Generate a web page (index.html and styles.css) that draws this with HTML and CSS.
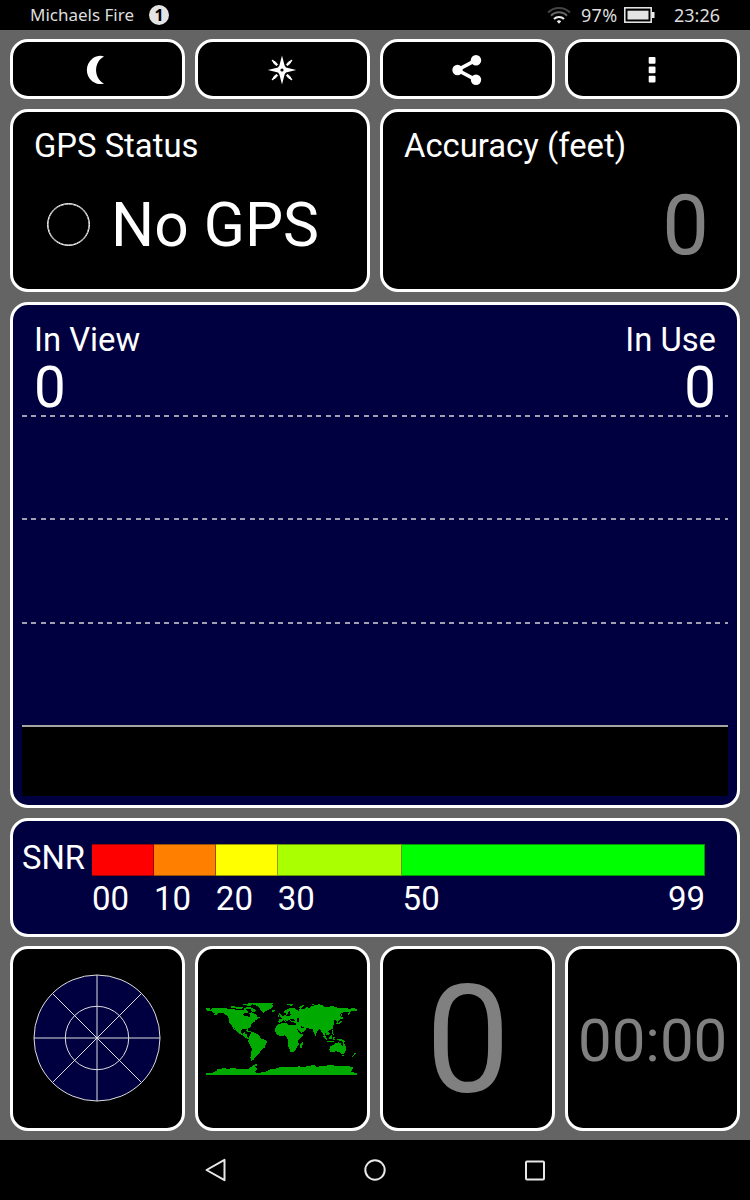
FILE: index.html
```html
<!DOCTYPE html>
<html lang="en">
<head>
  <meta charset="UTF-8">
  <title>GPS Status</title>
  <meta name="viewport" content="width=device-width, initial-scale=1.0">
  <link rel="stylesheet" href="styles.css">
</head>
<body>
<div class="screen">
  <header class="status-bar">
    <span class="device">Michaels Fire</span>
    <span class="badge">1</span>
    <svg class="wifi" width="24" height="18" viewBox="0 0 24 18" fill="none" stroke-width="2">
      <path d="M1 6.5A15.5 15.5 0 0 1 23 6.5" stroke="#444"/>
      <path d="M4 9.8A11 11 0 0 1 20 9.8" stroke="#666"/>
      <path d="M7 13A7 7 0 0 1 17 13" stroke="#eee"/>
      <path d="M9.8 15.3Q12 13.3 14.2 15.3L12 17.8Z" fill="#eee"/>
    </svg>
    <span class="percent">97%</span>
    <svg class="battery" width="31" height="16" viewBox="0 0 31 16">
      <rect x="0.8" y="0.8" width="26.4" height="14.4" fill="none" stroke="#eee" stroke-width="1.5"/>
      <rect x="3.5" y="3.7" width="21" height="8.8" fill="#e4e4e4"/>
      <rect x="28" y="5" width="2.5" height="6" fill="#eee"/>
    </svg>
    <span class="clock">23:26</span>
  </header>

  <main class="app">
    <nav class="row toolbar">
      <button class="panel">
        <svg width="30" height="30" viewBox="0 0 30 30"><path d="M22 1.400C18.500.3 14 .8 10.500 3.500C3 9.500 3 20.500 10.500 26.500C14 29 18.500 29.700 22 28.500C11.500 23 11.500 7 22 1.400Z" fill="#fff"/></svg>
      </button>
      <button class="panel">
        <svg width="30" height="30" viewBox="0 0 30 30" fill="#fff">
          <path d="M15 .5L17.600 10.500L19 12.400L29.200 15L19 17.400L17.600 19.500L15 29.500L12.400 19.500L11 17.400L.8 15L11 12.400L12.400 10.500Z"/>
          <path d="M5 5L8.700 7.200L10.600 9.600L9.600 10.600L7.200 8.700ZM25 5L22.800 8.700L20.400 10.600L19.400 9.600L21.300 7.200ZM5 25L7.200 21.300L9.600 19.400L10.600 20.400L8.700 22.800ZM25 25L21.300 22.800L19.400 20.400L20.400 19.400L22.800 21.300Z" stroke="#fff" stroke-width="1"/>
          <circle cx="15" cy="15" r="1.600" fill="#000"/>
        </svg>
      </button>
      <button class="panel">
        <svg width="30" height="32" viewBox="0 0 30 32" fill="#fff">
          <path d="M24 6.200L5.500 16L24 25.800" fill="none" stroke="#fff" stroke-width="3.600"/>
          <circle cx="24" cy="6.200" r="5.200"/><circle cx="5.500" cy="16" r="5.200"/><circle cx="24" cy="25.800" r="5.200"/>
        </svg>
      </button>
      <button class="panel">
        <svg width="8" height="28" viewBox="0 0 8 28" fill="#fff">
          <rect x=".7" y="1" width="6.800" height="6.800" rx="1"/><rect x=".7" y="10.400" width="6.800" height="6.800" rx="1"/><rect x=".7" y="19.800" width="6.800" height="6.800" rx="1"/>
        </svg>
      </button>
    </nav>

    <section class="row summary">
      <div class="panel">
        <h2>GPS Status</h2>
        <div class="gps-state">
          <span class="led"></span>
          <span>No GPS</span>
        </div>
      </div>
      <div class="panel">
        <h2>Accuracy (feet)</h2>
        <p class="accuracy">0</p>
      </div>
    </section>

    <section class="panel chart">
      <div class="chart-head">
        <div><h2>In View</h2><p class="count">0</p></div>
        <div class="in-use"><h2>In Use</h2><p class="count">0</p></div>
      </div>
      <div class="band"></div>
      <div class="band"></div>
      <div class="band"></div>
      <div class="axis"></div>
    </section>

    <section class="panel snr">
      <h2>SNR</h2>
      <div class="scale">
        <div class="step red"><i></i>00</div>
        <div class="step orange"><i></i>10</div>
        <div class="step yellow"><i></i>20</div>
        <div class="step lime"><i></i>30</div>
        <div class="step green"><i></i><span>50</span><span>99</span></div>
      </div>
    </section>

    <section class="row tiles">
      <div class="panel">
        <svg class="radar" width="130" height="130" viewBox="0 0 130 130" fill="none" stroke="#ddd" stroke-width="1">
          <circle cx="65" cy="65" r="63" fill="#000040"/>
          <circle cx="65" cy="65" r="31.700"/>
          <path d="M65 2V128M2 65H128M20.450 20.450L109.550 109.550M109.550 20.450L20.450 109.550"/>
        </svg>
      </div>
      <div class="panel">
        <!-- world map -->
        <svg class="map" width="172" height="100" viewBox="0 0 516 300" fill="#00aa00" shape-rendering="crispEdges">
          <!-- north america -->
          <path d="M30 54L42 55L44 60L50 55L57 53L72 55L84 54L100 57L112 56L122 60L136 61L144 58L146 53L151 54L150 61L158 63L155 69L146 68L140 73L146 79L156 79L160 85L162 76L160 70L166 66L174 71L178 70L183 79L190 84L182 87L187 91L177 91L179 94L172 97L166 103L164 110L156 116L158 125L154 125L151 117L140 117L134 121L135 129L141 132L145 125L149 125L147 132L153 134L153 141L157 145L162 146L158 148L149 144L144 138L137 135L128 131L121 123L115 114L116 121L112 115L107 106L100 98L99 88L96 81L89 74L81 69L68 68L61 74L53 75L57 71L51 69L49 63L43 64L30 61Z"/>
          <path d="M103 50L116 48L121 54L108 54ZM120 51L132 50L143 53L136 57L122 57ZM138 44L152 41L168 39L184 38L178 42L167 43L165 49L152 49L154 45ZM148 51L163 51L172 56L180 61L177 67L168 65L164 58L150 56ZM187 82L193 82L191 86ZM150 121L160 122L166 126L158 125ZM167 126L173 127L171 130L166 129Z"/>
          <!-- greenland, iceland -->
          <path d="M170 43L188 39L210 38L234 39L229 43L232 48L228 54L221 58L211 62L204 69L198 66L192 58L190 51L180 47ZM227 62L235 60L238 63L230 67Z"/>
          <!-- south america -->
          <path d="M161 132L168 128L180 130L190 137L195 145L206 149L214 154L209 162L206 173L198 178L193 185L187 192L183 196L178 200L174 208L172 211L166 212L163 204L166 190L167 174L160 162L156 154L160 145Z"/>
          <!-- africa -->
          <path d="M248 103L259 99L270 99L275 104L287 105L298 106L303 115L308 126L313 132L323 131L317 141L307 151L308 163L303 170L300 179L291 186L283 186L280 176L276 166L277 153L272 143L266 136L251 139L240 131L236 120L239 112ZM315 162L320 156L320 164L316 174L311 173L311 166Z"/>
          <!-- europe and asia -->
          <path d="M247 96L248 88L259 88L259 84L254 81L263 77L270 73L268 69L263 69L263 64L273 58L283 54L295 55L301 61L311 58L323 58L330 52L341 53L344 49L353 47L368 43L379 45L386 50L395 50L412 49L427 54L446 54L461 56L472 54L483 57L483 63L470 63L464 65L461 73L455 77L455 69L464 64L447 67L437 68L430 76L436 80L435 87L428 92L425 99L422 98L424 92L415 91L411 97L417 98L412 106L412 114L404 119L397 124L395 124L401 131L396 137L391 134L389 128L386 128L387 135L392 145L387 143L382 133L377 126L374 119L370 117L364 124L358 134L354 129L350 118L342 116L332 113L329 121L319 127L308 130L300 116L297 107L300 102L289 103L283 97L280 100L275 93L268 91L270 96L266 95L262 90L257 96L250 99Z"/>
          <path d="M253 80L251 75L247 72L252 69L257 76L259 81ZM245 76L249 76L249 80L245 79ZM271 43L283 42L292 44L287 47L274 46ZM309 54L316 47L325 45L317 52L313 57ZM340 44L354 43L352 47ZM435 90L439 95L433 101L421 102L418 100L430 97ZM434 81L442 83L437 89ZM436 70L440 78L437 82ZM357 132L361 134L359 138Z"/>
          <g fill="#000"><path d="M273 88L280 91L287 97L293 97L302 100L294 102L287 101L279 98ZM282 89L291 86L298 92L287 94ZM303 86L309 84L308 97L303 94ZM302 113L314 128L309 131ZM314 107L325 114L317 116ZM272 74L280 64L283 66L280 72L287 73L279 78L269 80ZM307 57L314 60L307 62Z"/></g>
          <!-- indonesia, australia, new zealand -->
          <path d="M380 135L389 142L395 150L390 150L384 143ZM398 142L407 134L410 138L406 147L398 148ZM411 142L418 141L414 145L417 151L411 149ZM408 121L412 121L411 128L415 135L411 136L407 129ZM392 152L407 153L418 155L414 157L394 155ZM423 146L433 146L444 151L451 157L442 156L436 153L430 153L424 149ZM402 169L410 166L418 159L424 161L426 157L435 159L435 165L440 167L442 156L446 163L450 172L449 183L444 191L436 192L429 185L419 184L402 187L400 178ZM438 195L444 195L441 199ZM472 188L481 189L478 194L470 201L468 199L475 194Z"/>
          <!-- antarctica -->
          <path d="M30 255V249L49 249L61 243L65 237L82 235L100 236L113 234L128 237L142 236L158 236L166 230L181 222L183 226L176 231L184 235L181 241L174 246L183 249L207 246L220 239L240 236L250 232L267 230L292 232L308 229L327 231L338 227L355 226L361 232L378 227L410 226L427 229L442 227L465 230L472 232L468 240L466 246L483 249V255Z"/>
        </svg>
      </div>
      <div class="panel fix">0</div>
      <div class="panel timer">00:00</div>
    </section>
  </main>

  <footer class="nav-bar">
    <svg width="24" height="26" viewBox="0 0 24 26"><path d="M3.500 13L21.500 2.800V23.200Z" fill="none" stroke="#e8e8e8" stroke-width="2" stroke-linejoin="round"/></svg>
    <svg width="24" height="24" viewBox="0 0 24 24"><circle cx="12" cy="12" r="9.700" fill="none" stroke="#e8e8e8" stroke-width="2"/></svg>
    <svg width="24" height="24" viewBox="0 0 24 24"><rect x="3" y="3.500" width="18" height="18" rx="1" fill="none" stroke="#e8e8e8" stroke-width="2"/></svg>
  </footer>
</div>
</body>
</html>
```

FILE: styles.css
```css
* { box-sizing: border-box; }
body { margin: 0; background: #000; color: #fff; font-family: Roboto, sans-serif; }
h2, p { margin: 0; font-weight: 400; }
h2 { font-size: 32.8px; line-height: 40px; }
svg { display: block; flex: none; }

.screen { width: 750px; height: 1200px; display: flex; flex-direction: column; overflow: hidden; }

.status-bar { height: 30px; display: flex; align-items: center; padding: 0 30px; color: #ddd; font: 17px/30px "Noto Sans", sans-serif; }
.device { width: 104px; white-space: nowrap; }
.badge { width: 20px; height: 20px; margin-left: 15px; border-radius: 50%; background: #e4e4e4; color: #000; font-size: 16px; font-weight: 700; line-height: 20px; text-align: center; }
.wifi { margin-left: auto; }
.percent { width: 37px; margin-left: 10px; padding-bottom: 1px; font-size: 18px; letter-spacing: 0.3px; }
.battery { margin-left: 6px; }
.clock { width: 46px; margin-left: 19px; padding-bottom: 1px; font-size: 18px; }

.app { flex: 1; display: flex; flex-direction: column; gap: 10px; padding: 9px 10px; background: #646464; }
.row { display: flex; gap: 10px; }
.panel { flex: 1; min-width: 0; padding: 0; background: #000; border: 3px solid #fff; border-radius: 18px; color: #fff; }

.toolbar { height: 60px; }
.toolbar .panel { display: flex; align-items: center; justify-content: center; padding: 1px 1px 0 0; }

.summary { height: 183px; }
.summary .panel { padding: 14px 21px 0; }
.gps-state { display: flex; align-items: center; margin: 24px 0 0 13px; font-size: 60.5px; line-height: 72px; }
.led { width: 43px; height: 43px; margin: -3px 21px 0 0; border: 1px solid #fff; border-radius: 50%; box-shadow: inset 0 0 0 0.5px #fff; }
.accuracy { margin: 12px 7px 0 0; color: #808080; font-size: 83px; line-height: 96px; text-align: right; }

.chart { flex: 0 0 506px; padding: 0 9px 9px; background: #000040; display: flex; flex-direction: column; }
.chart-head { height: 110px; display: flex; justify-content: space-between; padding: 15px 12px 0; }
.in-use { text-align: right; }
.count { font-size: 56.5px; line-height: 60px; margin-top: -2px; }
.band { flex: 1; background: repeating-linear-gradient(90deg, #a0a0b0 0 4.7px, transparent 4.7px 9.5px) top / 100% 2px no-repeat; }
.axis { height: 71px; background: #000; border-top: 2px solid #a4a4a0; }

.snr { flex: 0 0 119px; padding: 0 32px 0 9px; background: #000040; display: flex; }
.snr h2 { width: 70px; padding-top: 17px; }
.scale { flex: 1; display: flex; padding-top: 23px; font-size: 33px; line-height: 40px; }
.step { flex: 10 1 0; min-width: 0; text-indent: 2px; }
.step i { display: block; height: 32px; margin-bottom: 3px; border: solid rgba(0, 0, 0, 0.4); border-width: 1px 1px 1px 0; }
.red i { background: #f00; }
.orange i { background: #ff8000; }
.yellow i { background: #ff0; }
.lime { flex-grow: 20; }
.lime i { background: #af0; }
.green { flex-grow: 49; display: flex; flex-wrap: wrap; justify-content: space-between; align-content: flex-start; text-indent: 1px; }
.green i { width: 100%; background: #0f0; }

.tiles { height: 185px; margin-top: -1px; }
.tiles .panel { display: flex; align-items: center; justify-content: center; overflow: hidden; }
.tiles .radar { margin: 0 1px 1px 0; }
.tiles .map { margin: 2px 1px 0 0; }
.tiles .fix { padding: 4px 0 0 1px; color: #808080; font-size: 151px; line-height: 152px; }
.tiles .timer { padding-top: 3px; color: #808080; font-size: 60px; }

.nav-bar { height: 60px; display: flex; align-items: center; justify-content: center; gap: 136px; }
```
